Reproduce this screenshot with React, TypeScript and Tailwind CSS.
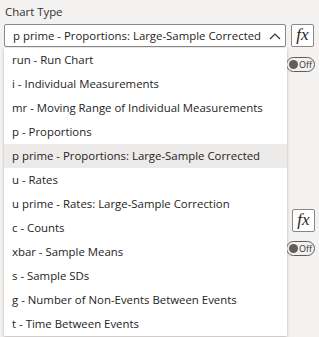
// Chart type selector with open dropdown (formatting pane style)

import React from 'react';

const chartTypes = [
  'run - Run Chart',
  'i - Individual Measurements',
  'mr - Moving Range of Individual Measurements',
  'p - Proportions',
  'p prime - Proportions: Large-Sample Corrected',
  'u - Rates',
  'u prime - Rates: Large-Sample Correction',
  'c - Counts',
  'xbar - Sample Means',
  's - Sample SDs',
  'g - Number of Non-Events Between Events',
  't - Time Between Events',
];

function FxButton() {
  return (
    <div className="w-[23px] h-[23px] bg-white border border-[#8a8886] rounded-[2px] flex items-center justify-center">
      <span className="italic text-[17px] leading-none text-[#252423] -mt-[2px]" style={{ fontFamily: '"Liberation Serif", serif' }}>
        fx
      </span>
    </div>
  );
}

function Toggle() {
  return (
    <div className="w-[29px] h-[15px] border border-[#605e5c] rounded-full flex items-center pl-[2px] gap-[1px]">
      <div className="w-[9px] h-[9px] rounded-full bg-[#605e5c]" />
      <span className="text-[9px] leading-none text-[#323130]">Off</span>
    </div>
  );
}

export default function App() {
  const selected = 4;

  return (
    <div
      className="relative w-[319px] h-[337px] bg-[#f3f2f1] overflow-hidden text-[#252423]"
      style={{ fontFamily: '"Open Sans", "Noto Sans", sans-serif' }}
    >
      {/* Label */}
      <div className="pl-[5px] pt-[4px] text-[11.4px] leading-[16px] text-[#323130]">Chart Type</div>

      {/* Select row */}
      <div className="flex items-start gap-[5px] pl-[4px] mt-[4px]">
        <div className="w-[282px] h-[23px] bg-white border border-[#8a8886] rounded-[2px] flex items-center justify-between pl-[8px] pr-[4px]">
          <span className="text-[11.4px] leading-none whitespace-nowrap text-[#252423]">
            p prime - Proportions: Large-Sample Corrected
          </span>
          <svg width="12" height="8" viewBox="0 0 12 8" fill="none" className="shrink-0">
            <path d="M1 7 L6 2 L11 7" stroke="#323130" strokeWidth="1.2" />
          </svg>
        </div>
        <FxButton />
      </div>

      {/* Controls underneath the open list */}
      <div className="flex flex-col items-end pr-[4px]">
        <div className="mt-[10px]">
          <Toggle />
        </div>
        <div className="mt-[137px]">
          <FxButton />
        </div>
        <div className="mt-[9px]">
          <Toggle />
        </div>
      </div>

      {/* Open dropdown list */}
      <div className="absolute left-[4px] top-[48px] w-[283px] bg-white shadow-[0_1px_3px_rgba(0,0,0,0.25)] flex flex-col">
        {chartTypes.map((t, i) => (
          <div
            key={t}
            className={`h-[24px] flex items-center pl-[8px] text-[11.4px] whitespace-nowrap text-[#252423] ${
              i === selected ? 'bg-[#edebe9]' : ''
            }`}
          >
            {t}
          </div>
        ))}
      </div>
    </div>
  );
}
